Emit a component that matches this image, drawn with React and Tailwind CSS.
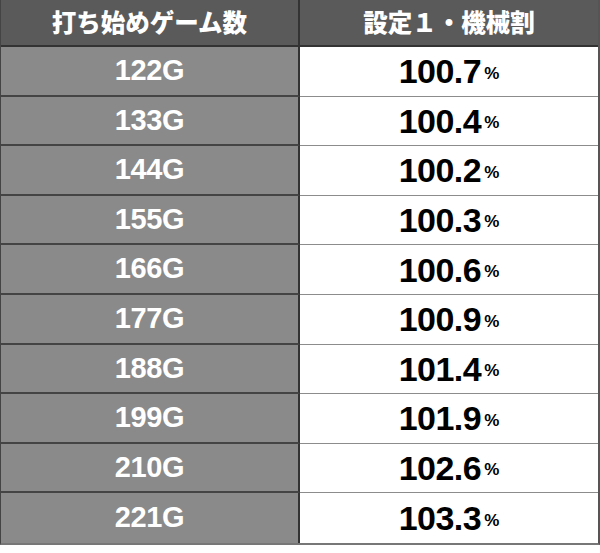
const rows = [
  ['122G', '100.7'],
  ['133G', '100.4'],
  ['144G', '100.2'],
  ['155G', '100.3'],
  ['166G', '100.6'],
  ['177G', '100.9'],
  ['188G', '101.4'],
  ['199G', '101.9'],
  ['210G', '102.6'],
  ['221G', '103.3'],
]

export default function App() {
  return (
    <div className="w-[600px] h-[553px] bg-white" style={{ fontFamily: '"Liberation Sans", Arial, sans-serif' }}>
      <div className="w-[600px] border-l border-r-2 border-b-2 border-l-[#444] border-r-[#555] border-b-[#777]">
        {/* Header */}
        <div className="flex h-[47px] bg-[#5a5a5a] border-b-2 border-[#333] text-white font-black text-[24.5px] leading-none" style={{ fontFamily: '"Noto Sans CJK JP", sans-serif' }}>
          <div className="w-[299px] flex items-center justify-center border-r-2 border-[#333]">打ち始めゲーム数</div>
          <div className="flex-1 flex items-center justify-center">設定１・機械割</div>
        </div>

        {/* Rows */}
        {rows.map(([g, pct], i) => (
          <div key={g} className="flex h-[49.6px]">
            <div className={`w-[299px] flex items-center justify-center bg-[#8a8a8a] border-r-2 border-[#333] text-white font-bold text-[29px] tracking-[-0.3px] ${i < rows.length - 1 ? 'border-b-2 border-b-[#444]' : ''}`}>
              {g}
            </div>
            <div className={`flex-1 flex items-center justify-center bg-white text-black font-bold ${i < rows.length - 1 ? 'border-b-[1.5px] border-b-[#8c8c8c]' : ''}`}>
              <span className="text-[34px] leading-none tracking-[-0.5px]">{pct}</span>
              <span className="text-[17px] leading-none self-end mb-[14px] ml-[3px]">%</span>
            </div>
          </div>
        ))}
      </div>
    </div>
  )
}
